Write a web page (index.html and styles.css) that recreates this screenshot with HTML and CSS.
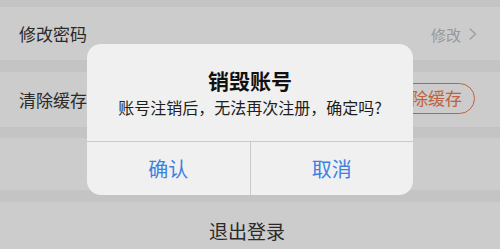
FILE: index.html
```html
<!DOCTYPE html>
<html lang="zh-CN">
<head>
<meta charset="utf-8">
<title>设置</title>
<link rel="stylesheet" href="styles.css">
</head>
<body>
<div class="page">
  <div class="list">
    <div class="row row-a">
      <span class="label">修改密码</span>
      <span class="action">修改<svg class="chev" width="8" height="12" viewBox="0 0 8 12"><path d="M1.2 1 L6.4 6 L1.2 11" fill="none" stroke="#c9c9c9" stroke-width="1.6" stroke-linecap="round" stroke-linejoin="round"/></svg></span>
    </div>
    <div class="row row-b">
      <span class="label">清除缓存</span>
      <span class="pill">清除缓存</span>
    </div>
    <div class="row row-c"></div>
    <div class="row row-d">
      <span class="logout">退出登录</span>
    </div>
  </div>
</div>
<div class="mask"></div>
<div class="dialog">
  <div class="dialog-body">
    <div class="dialog-title">销毁账号</div>
    <div class="dialog-msg">账号注销后，无法再次注册，确定吗?</div>
  </div>
  <div class="dialog-btns">
    <div class="btn">确认</div>
    <div class="btn btn-right">取消</div>
  </div>
</div>
</body>
</html>
```

FILE: styles.css
```css
html, body {
  margin: 0;
  padding: 0;
}
body {
  width: 500px;
  height: 249px;
  overflow: hidden;
  background: #f6f6f6;
  font-family: "Noto Sans CJK SC", "Noto Sans", sans-serif;
  position: relative;
}
.list {
  display: flex;
  flex-direction: column;
  padding-top: 7px;
}
.row {
  background: #ffffff;
  display: flex;
  align-items: center;
  justify-content: space-between;
  padding: 0 25px 0 19px;
}
.row-a { height: 53px; padding-right: 23px; }
.row-b { height: 55px; margin-top: 12px; }
.row-c { height: 52px; margin-top: 11px; }
.row-d { height: 56px; margin-top: 12px; justify-content: center; }
.label {
  font-size: 17px;
  color: #353535;
  line-height: 20px;
}
.action {
  display: flex;
  align-items: center;
  font-size: 15px;
  color: #c0c0c0;
  gap: 8px;
  margin-top: 1px;
}
.chev { display: block; }
.pill {
  font-size: 17px;
  line-height: 20px;
  color: #f17a4f;
  border: 1.5px solid #f17a4f;
  border-radius: 16px;
  padding: 4px 12px 5px 12px;
  margin-top: -2px;
}
.logout {
  font-size: 19px;
  color: #353535;
}
.mask {
  position: absolute;
  inset: 0;
  background: rgba(0, 0, 0, 0.2);
}
.dialog {
  position: absolute;
  left: 87px;
  top: 44px;
  width: 326px;
  height: 151px;
  border-radius: 14px;
  background: #f0f0f0;
  display: flex;
  flex-direction: column;
  overflow: hidden;
}
.dialog-body {
  height: 97px;
  box-sizing: border-box;
  padding-top: 23px;
  text-align: center;
}
.dialog-title {
  font-size: 21px;
  font-weight: bold;
  line-height: 26px;
  color: #111111;
}
.dialog-msg {
  margin-top: 3px;
  font-size: 16px;
  line-height: 22px;
  color: #1e1e1e;
}
.dialog-btns {
  display: flex;
  border-top: 1px solid #cacaca;
  flex: 1;
}
.btn {
  flex: 1;
  display: flex;
  align-items: center;
  justify-content: center;
  font-size: 20px;
  color: #3c80e4;
}
.btn-right {
  border-left: 1px solid #cacaca;
}
```
